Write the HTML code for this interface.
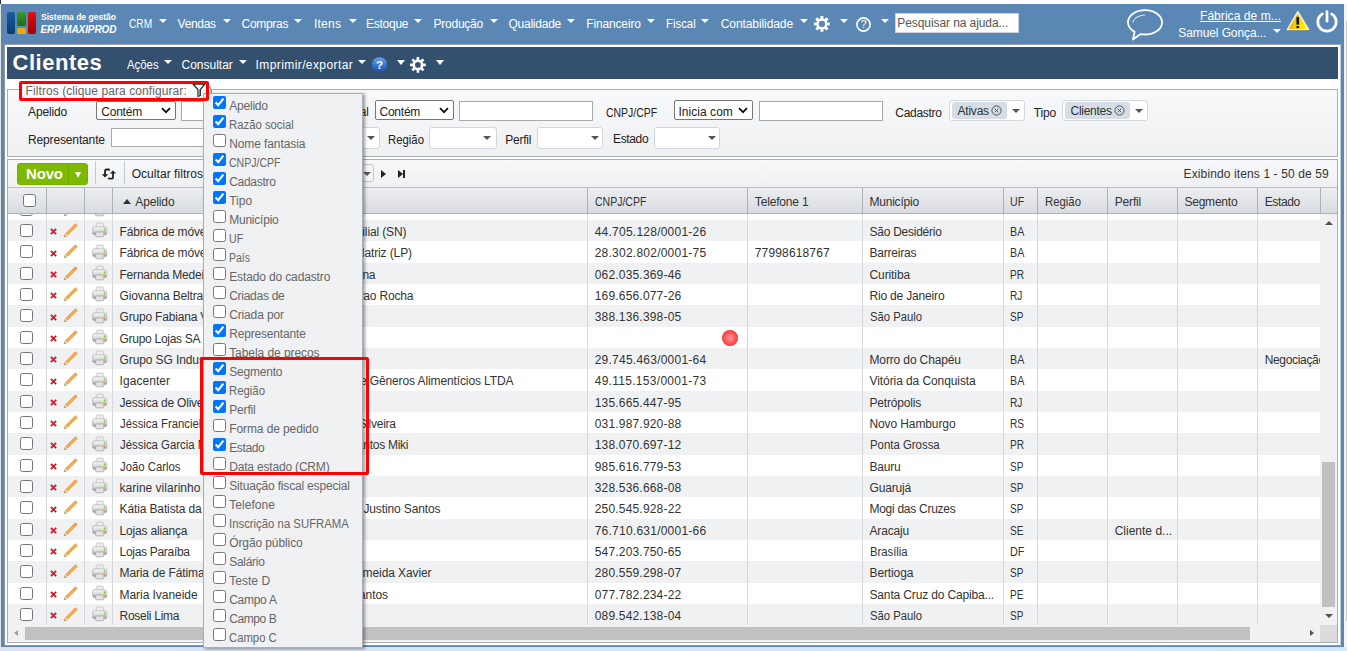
<!DOCTYPE html><html><head><meta charset="utf-8"><title>Clientes</title><style>

*{box-sizing:border-box}
html,body{margin:0;padding:0}
body{width:1347px;height:651px;overflow:hidden;position:relative;background:#fff;font-family:"Liberation Sans",sans-serif;font-size:12px;color:#333}
.ab{position:absolute}
.tx{position:absolute;white-space:nowrap}
.cb{position:absolute;margin:0;width:13px;height:13px}
.s2{position:absolute;border:1px solid #d3d6da;border-radius:3px;background:#fff}
.row{position:absolute;left:0;width:1312px;height:21.333px}
.odd{background:#f0f1f3}
.vd{position:absolute;width:1px;background:#d4d7dc}
.hd{position:absolute;width:1px;background:#aab1b9}

</style></head><body>
<div class="ab" style="left:0px;top:0px;width:1px;height:4px;background:#1e2f45;"></div>
<div class="ab" style="left:1px;top:4px;width:1343px;height:643px;background:#5b87b5;"></div>
<div class="ab" style="left:0px;top:4px;width:1px;height:647px;background:#e6e2de;"></div>
<div class="ab" style="left:1344px;top:4px;width:3px;height:647px;background:#f4f4f4;"></div>
<div class="ab" style="left:1345.5px;top:21px;width:1.5px;height:600px;background:#c8c8c8;"></div>
<div class="ab" style="left:0px;top:647px;width:1347px;height:4px;background:linear-gradient(90deg,#dde2f2,#d6e4f3 50%,#d0e9f4);"></div>
<div class="ab" style="left:4px;top:44px;width:1337px;height:601.5px;background:#fff;border:1px solid #8c97a4;border-right-color:#c9ced4;border-top-color:#9aa3ad"></div>
<div class="ab" style="left:7px;top:47px;width:1331px;height:31.5px;background:#34506f;"></div>
<div class="ab" style="left:4px;top:10px;width:32px;height:24px">
<div class="ab" style="left:3px;top:2px;width:8px;height:21.5px;border-radius:2px;background:linear-gradient(#1a5aa0,#0d3b73)"></div>
<div class="ab" style="left:13px;top:2px;width:8.5px;height:13.5px;border-radius:2px;background:linear-gradient(#3a9a2a,#1d6e12)"></div>
<div class="ab" style="left:13px;top:17.5px;width:8.5px;height:6px;border-radius:1.5px;background:#e9a90f"></div>
<div class="ab" style="left:23.5px;top:2px;width:8px;height:21.5px;border-radius:2px;background:linear-gradient(#e01010,#a00000)"></div>
</div>
<div class="tx" style="left:41.00px;top:12.13px;font-size:9px;line-height:11px;color:#fff;font-weight:bold;transform:scaleX(0.9491);transform-origin:0 0;">Sistema de gestão</div>
<div class="tx" style="left:40.50px;top:23.99px;font-size:10px;line-height:12px;color:#fff;font-weight:bold;font-style:italic;letter-spacing:-0.078px;">ERP MAXIPROD</div>
<div class="tx" style="left:129.10px;top:16.83px;font-size:12px;line-height:14px;color:#fff;transform:scaleX(0.8453);transform-origin:0 0;">CRM</div>
<div class="ab" style="left:158.5px;top:18.8px;width:0;height:0;border-left:4.25px solid transparent;border-right:4.25px solid transparent;border-top:4.5px solid #fff"></div>
<div class="tx" style="left:177.60px;top:16.83px;font-size:12px;line-height:14px;color:#fff;letter-spacing:-0.307px;">Vendas</div>
<div class="ab" style="left:222.5px;top:18.8px;width:0;height:0;border-left:4.25px solid transparent;border-right:4.25px solid transparent;border-top:4.5px solid #fff"></div>
<div class="tx" style="left:241.60px;top:16.83px;font-size:12px;line-height:14px;color:#fff;letter-spacing:-0.313px;">Compras</div>
<div class="ab" style="left:294px;top:18.8px;width:0;height:0;border-left:4.25px solid transparent;border-right:4.25px solid transparent;border-top:4.5px solid #fff"></div>
<div class="tx" style="left:313.90px;top:16.83px;font-size:12px;line-height:14px;color:#fff;letter-spacing:0.247px;">Itens</div>
<div class="ab" style="left:348.5px;top:18.8px;width:0;height:0;border-left:4.25px solid transparent;border-right:4.25px solid transparent;border-top:4.5px solid #fff"></div>
<div class="tx" style="left:366.10px;top:16.83px;font-size:12px;line-height:14px;color:#fff;letter-spacing:-0.272px;">Estoque</div>
<div class="ab" style="left:414px;top:18.8px;width:0;height:0;border-left:4.25px solid transparent;border-right:4.25px solid transparent;border-top:4.5px solid #fff"></div>
<div class="tx" style="left:433.50px;top:16.83px;font-size:12px;line-height:14px;color:#fff;letter-spacing:-0.238px;">Produção</div>
<div class="ab" style="left:489.5px;top:18.8px;width:0;height:0;border-left:4.25px solid transparent;border-right:4.25px solid transparent;border-top:4.5px solid #fff"></div>
<div class="tx" style="left:508.40px;top:16.83px;font-size:12px;line-height:14px;color:#fff;letter-spacing:-0.226px;">Qualidade</div>
<div class="ab" style="left:566.5px;top:18.8px;width:0;height:0;border-left:4.25px solid transparent;border-right:4.25px solid transparent;border-top:4.5px solid #fff"></div>
<div class="tx" style="left:586.30px;top:16.83px;font-size:12px;line-height:14px;color:#fff;letter-spacing:-0.158px;">Financeiro</div>
<div class="ab" style="left:647px;top:18.8px;width:0;height:0;border-left:4.25px solid transparent;border-right:4.25px solid transparent;border-top:4.5px solid #fff"></div>
<div class="tx" style="left:665.80px;top:16.83px;font-size:12px;line-height:14px;color:#fff;transform:scaleX(0.9478);transform-origin:0 0;">Fiscal</div>
<div class="ab" style="left:701px;top:18.8px;width:0;height:0;border-left:4.25px solid transparent;border-right:4.25px solid transparent;border-top:4.5px solid #fff"></div>
<div class="tx" style="left:720.80px;top:16.83px;font-size:12px;line-height:14px;color:#fff;letter-spacing:-0.090px;">Contabilidade</div>
<div class="ab" style="left:799.5px;top:18.8px;width:0;height:0;border-left:4.25px solid transparent;border-right:4.25px solid transparent;border-top:4.5px solid #fff"></div>
<svg class="ab" style="left:814px;top:16px" width="15.8" height="15.8" viewBox="0 0 16 16"><g fill="#fff"><rect x="6.5" y="0" width="3.0" height="3.4000000000000004" rx=".4" transform="rotate(0.0 8 8)"/><rect x="6.5" y="0" width="3.0" height="3.4000000000000004" rx=".4" transform="rotate(45.0 8 8)"/><rect x="6.5" y="0" width="3.0" height="3.4000000000000004" rx=".4" transform="rotate(90.0 8 8)"/><rect x="6.5" y="0" width="3.0" height="3.4000000000000004" rx=".4" transform="rotate(135.0 8 8)"/><rect x="6.5" y="0" width="3.0" height="3.4000000000000004" rx=".4" transform="rotate(180.0 8 8)"/><rect x="6.5" y="0" width="3.0" height="3.4000000000000004" rx=".4" transform="rotate(225.0 8 8)"/><rect x="6.5" y="0" width="3.0" height="3.4000000000000004" rx=".4" transform="rotate(270.0 8 8)"/><rect x="6.5" y="0" width="3.0" height="3.4000000000000004" rx=".4" transform="rotate(315.0 8 8)"/></g><circle cx="8" cy="8" r="4.4" fill="none" stroke="#fff" stroke-width="2.3999999999999995"/></svg>
<div class="ab" style="left:839.5px;top:18.8px;width:0;height:0;border-left:4.25px solid transparent;border-right:4.25px solid transparent;border-top:4.5px solid #fff"></div>
<svg class="ab" style="left:855.5px;top:16.5px" width="15" height="15" viewBox="0 0 15 15"><circle cx="7.5" cy="7.5" r="6.6" fill="none" stroke="#fff" stroke-width="1.6"/><text x="7.5" y="11.4" text-anchor="middle" font-family="Liberation Sans" font-size="11" fill="#fff">?</text></svg>
<div class="ab" style="left:880.7px;top:18.8px;width:0;height:0;border-left:4.25px solid transparent;border-right:4.25px solid transparent;border-top:4.5px solid #fff"></div>
<div class="ab" style="left:895px;top:13px;width:124px;height:20px;background:#fff;border:1px solid #c8d3df"></div>
<div class="tx" style="left:897.30px;top:16.33px;font-size:12px;line-height:14px;color:#555;letter-spacing:-0.084px;">Pesquisar na ajuda...</div>
<svg class="ab" style="left:1126px;top:8px" width="38" height="34" viewBox="0 0 38 34"><path d="M19 2.2C9.5 2.2 2 7.6 2 14.3c0 4 2.6 7.4 6.6 9.6L7 31.5l7.6-5.4c1.4.3 2.9.4 4.4.4 9.5 0 17-5.4 17-12.1S28.5 2.2 19 2.2z" fill="none" stroke="#fff" stroke-width="1.8" stroke-linejoin="round"/><path d="M6.8 14.2c1.3-3.8 5.5-6.6 12-7.2" fill="none" stroke="#fff" stroke-width="1.1" stroke-linecap="round" opacity=".75"/></svg>
<div class="tx" style="left:1200.00px;top:9.13px;font-size:12px;line-height:14px;color:#fff;letter-spacing:0.056px;text-decoration:underline;">Fábrica de m...</div>
<div class="tx" style="left:1178.30px;top:26.03px;font-size:12px;line-height:14px;color:#fff;letter-spacing:-0.098px;">Samuel Gonça...</div>
<div class="ab" style="left:1273px;top:29.2px;width:0;height:0;border-left:4.0px solid transparent;border-right:4.0px solid transparent;border-top:4.5px solid #fff"></div>
<svg class="ab" style="left:1286px;top:10px" width="25" height="22" viewBox="0 0 25 22"><defs><linearGradient id="wg" x1="0" y1="0" x2="1" y2="0"><stop offset="0" stop-color="#f4a800"/><stop offset=".55" stop-color="#ffd800"/><stop offset="1" stop-color="#ffff20"/></linearGradient></defs><path d="M1.2 20.3h22.4" stroke="#6a6a6a" stroke-width="1.4"/><path d="M11.8 1.6L1.3 19.6h21.4z" fill="url(#wg)" stroke="#f4f4f0" stroke-width="1.3" stroke-linejoin="round"/><rect x="10.4" y="6.8" width="2.7" height="8" rx=".8" fill="#111"/><rect x="10.4" y="16" width="2.7" height="2.2" fill="#222"/></svg>
<svg class="ab" style="left:1315px;top:8.3px" width="24" height="25" viewBox="0 0 24 25"><path d="M7.4 5.9A9.2 9.2 0 1 0 16.6 5.9" fill="none" stroke="#fff" stroke-width="2.7" stroke-linecap="round"/><path d="M12 3.6V13.2" stroke="#fff" stroke-width="2.7" stroke-linecap="round"/></svg>
<div class="tx" style="left:12.50px;top:50.33px;font-size:22px;line-height:26px;color:#fff;font-weight:bold;letter-spacing:0.532px;">Clientes</div>
<div class="tx" style="left:126.70px;top:57.83px;font-size:12px;line-height:14px;color:#fff;transform:scaleX(0.9475);transform-origin:0 0;">Ações</div>
<div class="ab" style="left:164px;top:60px;width:0;height:0;border-left:4.2px solid transparent;border-right:4.2px solid transparent;border-top:4.6px solid #fff"></div>
<div class="tx" style="left:181.50px;top:57.83px;font-size:12px;line-height:14px;color:#fff;">Consultar</div>
<div class="ab" style="left:238.5px;top:60px;width:0;height:0;border-left:4.2px solid transparent;border-right:4.2px solid transparent;border-top:4.6px solid #fff"></div>
<div class="tx" style="left:255.60px;top:57.83px;font-size:12px;line-height:14px;color:#fff;letter-spacing:0.402px;">Imprimir/exportar</div>
<div class="ab" style="left:358px;top:60px;width:0;height:0;border-left:4.2px solid transparent;border-right:4.2px solid transparent;border-top:4.6px solid #fff"></div>
<svg class="ab" style="left:371.5px;top:57.3px" width="15" height="15.3" viewBox="0 0 15 15.3"><defs><linearGradient id="hg" x1="0" y1="0" x2="0" y2="1"><stop offset="0" stop-color="#6ea2ec"/><stop offset=".5" stop-color="#3a78d8"/><stop offset="1" stop-color="#1c4fae"/></linearGradient></defs><circle cx="7.5" cy="7.65" r="7.5" fill="url(#hg)"/><text x="7.5" y="12" text-anchor="middle" font-family="Liberation Sans" font-weight="bold" font-size="11.5" fill="#fff">?</text></svg>
<div class="ab" style="left:397px;top:60px;width:0;height:0;border-left:4.0px solid transparent;border-right:4.0px solid transparent;border-top:5px solid #fff"></div>
<svg class="ab" style="left:410px;top:57px" width="15.8" height="15.8" viewBox="0 0 16 16"><g fill="#fff"><rect x="6.7" y="0" width="2.6" height="3.4000000000000004" rx=".4" transform="rotate(0.0 8 8)"/><rect x="6.7" y="0" width="2.6" height="3.4000000000000004" rx=".4" transform="rotate(45.0 8 8)"/><rect x="6.7" y="0" width="2.6" height="3.4000000000000004" rx=".4" transform="rotate(90.0 8 8)"/><rect x="6.7" y="0" width="2.6" height="3.4000000000000004" rx=".4" transform="rotate(135.0 8 8)"/><rect x="6.7" y="0" width="2.6" height="3.4000000000000004" rx=".4" transform="rotate(180.0 8 8)"/><rect x="6.7" y="0" width="2.6" height="3.4000000000000004" rx=".4" transform="rotate(225.0 8 8)"/><rect x="6.7" y="0" width="2.6" height="3.4000000000000004" rx=".4" transform="rotate(270.0 8 8)"/><rect x="6.7" y="0" width="2.6" height="3.4000000000000004" rx=".4" transform="rotate(315.0 8 8)"/></g><circle cx="8" cy="8" r="4.25" fill="none" stroke="#fff" stroke-width="2.6999999999999997"/></svg>
<div class="ab" style="left:436px;top:60px;width:0;height:0;border-left:4.0px solid transparent;border-right:4.0px solid transparent;border-top:5px solid #fff"></div>
<div class="ab" style="left:7px;top:89px;width:1331px;height:68px;border:1px solid #a7aeb6;background:linear-gradient(#f8f9fa,#eff0f2)"></div>
<div class="ab" style="left:20px;top:83px;width:192px;height:6.5px;background:#fff;"></div>
<div class="ab" style="left:20px;top:89.5px;width:192px;height:4px;background:#f8f9fa;"></div>
<div class="tx" style="left:25.60px;top:84.13px;font-size:12px;line-height:14px;color:#666;letter-spacing:0.077px;">Filtros (clique para configurar:</div>
<div class="tx" style="left:208.50px;top:84.13px;font-size:12px;line-height:14px;color:#666;">)</div>
<svg class="ab" style="left:192px;top:83px" width="14" height="14" viewBox="0 0 14 14"><path d="M1.2 1.2h11.6L8.3 6.6v5.8L6 13.3V6.6z" fill="#fff" stroke="#222" stroke-width="1.3" stroke-linejoin="round"/><path d="M6.1 7v6l2.1-.9V7z" fill="#888"/></svg>
<div class="tx" style="left:28.10px;top:105.23px;font-size:12px;line-height:14px;color:#222;letter-spacing:-0.155px;">Apelido</div>
<div class="ab" style="left:96px;top:100.5px;width:80px;height:19px;border:1px solid #767676;border-radius:2px;background:#fff"></div><div class="tx" style="left:101.30px;top:105.33px;font-size:12px;line-height:14px;color:#222;letter-spacing:-0.238px;">Contém</div><svg class="ab" style="left:161px;top:107.0px" width="10" height="7" viewBox="0 0 10 7"><path d="M1 1.2l4 4 4-4" fill="none" stroke="#111" stroke-width="1.8"/></svg>
<div class="ab" style="left:181px;top:101px;width:160px;height:19.5px;border:1px solid #a9a9a9;background:#fff"></div>
<div class="tx" style="left:304.18px;top:105.23px;font-size:12px;line-height:14px;color:#222;transform:scaleX(0.9436);transform-origin:0 0;">Razão social</div>
<div class="ab" style="left:374.5px;top:100.3px;width:79px;height:19.3px;border:1px solid #767676;border-radius:2px;background:#fff"></div><div class="tx" style="left:379.50px;top:105.33px;font-size:12px;line-height:14px;color:#222;letter-spacing:-0.238px;">Contém</div><svg class="ab" style="left:438.5px;top:106.8px" width="10" height="7" viewBox="0 0 10 7"><path d="M1 1.2l4 4 4-4" fill="none" stroke="#111" stroke-width="1.8"/></svg>
<div class="ab" style="left:459.3px;top:101px;width:133.5px;height:19.6px;border:1px solid #a9a9a9;background:#fff"></div>
<div class="tx" style="left:606.00px;top:106.03px;font-size:12px;line-height:14px;color:#222;transform:scaleX(0.8710);transform-origin:0 0;">CNPJ/CPF</div>
<div class="ab" style="left:674.4px;top:100.3px;width:79px;height:19.3px;border:1px solid #767676;border-radius:2px;background:#fff"></div><div class="tx" style="left:678.50px;top:105.33px;font-size:12px;line-height:14px;color:#222;letter-spacing:0.038px;">Inicia com</div><svg class="ab" style="left:738.4px;top:106.8px" width="10" height="7" viewBox="0 0 10 7"><path d="M1 1.2l4 4 4-4" fill="none" stroke="#111" stroke-width="1.8"/></svg>
<div class="ab" style="left:758.9px;top:101px;width:124px;height:19.6px;border:1px solid #a9a9a9;background:#fff"></div>
<div class="tx" style="left:895.30px;top:106.03px;font-size:12px;line-height:14px;color:#222;letter-spacing:-0.292px;">Cadastro</div>
<div class="s2" style="left:948.5px;top:99.6px;width:76px;height:21.8px"></div>
<div class="ab" style="left:952px;top:102px;width:55px;height:16.7px;border-radius:3px;background:#d5dde7"></div>
<div class="tx" style="left:957.50px;top:104.33px;font-size:12px;line-height:14px;color:#333;letter-spacing:-0.216px;">Ativas</div>
<svg class="ab" style="left:991px;top:105px" width="11" height="11" viewBox="0 0 11 11"><circle cx="5.5" cy="5.5" r="4.6" fill="none" stroke="#555" stroke-width="1"/><path d="M3.6 3.6l3.8 3.8M7.4 3.6l-3.8 3.8" stroke="#555" stroke-width="1"/></svg>
<div class="ab" style="left:1012px;top:109px;width:0;height:0;border-left:4.5px solid transparent;border-right:4.5px solid transparent;border-top:4.5px solid #555"></div>
<div class="tx" style="left:1033.70px;top:106.03px;font-size:12px;line-height:14px;color:#222;letter-spacing:-0.099px;">Tipo</div>
<div class="s2" style="left:1061.5px;top:99.6px;width:86px;height:21.8px"></div>
<div class="ab" style="left:1065.4px;top:102px;width:64.5px;height:16.7px;border-radius:3px;background:#d5dde7"></div>
<div class="tx" style="left:1070.50px;top:104.33px;font-size:12px;line-height:14px;color:#333;letter-spacing:-0.281px;">Clientes</div>
<svg class="ab" style="left:1114px;top:105px" width="11" height="11" viewBox="0 0 11 11"><circle cx="5.5" cy="5.5" r="4.6" fill="none" stroke="#555" stroke-width="1"/><path d="M3.6 3.6l3.8 3.8M7.4 3.6l-3.8 3.8" stroke="#555" stroke-width="1"/></svg>
<div class="ab" style="left:1134.5px;top:109px;width:0;height:0;border-left:4.5px solid transparent;border-right:4.5px solid transparent;border-top:4.5px solid #555"></div>
<div class="tx" style="left:28.00px;top:132.73px;font-size:12px;line-height:14px;color:#222;letter-spacing:-0.143px;">Representante</div>
<div class="ab" style="left:111px;top:128.4px;width:200px;height:19px;border:1px solid #a9a9a9;background:#fff"></div>
<div class="s2" style="left:300px;top:126.5px;width:79.5px;height:22px"></div>
<div class="ab" style="left:366.5px;top:136px;width:0;height:0;border-left:4.5px solid transparent;border-right:4.5px solid transparent;border-top:4.5px solid #555"></div>
<div class="tx" style="left:388.00px;top:132.73px;font-size:12px;line-height:14px;color:#222;transform:scaleX(0.9467);transform-origin:0 0;">Região</div>
<div class="s2" style="left:429.2px;top:126.5px;width:67.4px;height:22px"></div>
<div class="ab" style="left:482.5px;top:136px;width:0;height:0;border-left:4.5px solid transparent;border-right:4.5px solid transparent;border-top:4.5px solid #555"></div>
<div class="tx" style="left:505.30px;top:132.73px;font-size:12px;line-height:14px;color:#222;letter-spacing:-0.268px;">Perfil</div>
<div class="s2" style="left:537.4px;top:126.5px;width:65.8px;height:22px"></div>
<div class="ab" style="left:590.5px;top:136px;width:0;height:0;border-left:4.5px solid transparent;border-right:4.5px solid transparent;border-top:4.5px solid #555"></div>
<div class="tx" style="left:613.00px;top:132.43px;font-size:12px;line-height:14px;color:#222;letter-spacing:-0.352px;">Estado</div>
<div class="s2" style="left:654.4px;top:126.5px;width:66px;height:22px"></div>
<div class="ab" style="left:707.5px;top:136px;width:0;height:0;border-left:4.5px solid transparent;border-right:4.5px solid transparent;border-top:4.5px solid #555"></div>
<div class="ab" style="left:7px;top:159px;width:1331px;height:483.5px;border:1px solid #a7aeb6;background:#fff"></div>
<div class="ab" style="left:8px;top:160px;width:1329px;height:27.5px;background:linear-gradient(#f7f8f9,#eef0f2);border-bottom:1px solid #b8bec5"></div>
<div class="ab" style="left:17.2px;top:163.2px;width:70.8px;height:21.5px;border-radius:3px;background:#7cb900;border:1px solid #74b000"></div>
<div class="ab" style="left:68px;top:163.2px;width:1px;height:21.5px;background:#70a800;"></div>
<div class="tx" style="left:26.00px;top:165.04px;font-size:15px;line-height:18px;color:#fff;font-weight:bold;letter-spacing:-0.166px;">Novo</div>
<div class="ab" style="left:74.5px;top:172px;width:0;height:0;border-left:3.5px solid transparent;border-right:3.5px solid transparent;border-top:6.5px solid #fff"></div>
<div class="ab" style="left:94.5px;top:161px;width:1px;height:23px;background:#c4c9cf;"></div>
<div class="ab" style="left:124.3px;top:161px;width:1px;height:23px;background:#c4c9cf;"></div>
<svg class="ab" style="left:98px;top:164px" width="24" height="20" viewBox="0 0 24 20"><path d="M7 11V7.3c0-1 .6-1.8 1.6-1.8h2.2l.8 1" fill="none" stroke="#222" stroke-width="1.8"/><path d="M3.8 10.2h6.4L7 13.4z" fill="#222"/><path d="M15 9v4.4c0 .9-.6 1.3-1.6 1.3h-2.2l-.8-1" fill="none" stroke="#222" stroke-width="1.8"/><path d="M11.8 9.6h6.4L15 6.4z" fill="#222"/></svg>
<div class="tx" style="left:131.70px;top:166.83px;font-size:12px;line-height:14px;color:#222;letter-spacing:0.049px;">Ocultar filtros</div>
<div class="s2" style="left:300px;top:163.6px;width:74px;height:18px;border-color:#c5c9ce;background:#f4f5f6"></div>
<div class="ab" style="left:362.5px;top:172px;width:0;height:0;border-left:4.5px solid transparent;border-right:4.5px solid transparent;border-top:4.5px solid #555"></div>
<div class="ab" style="left:380.5px;top:169.8px;width:0;height:0;border-top:4.3px solid transparent;border-bottom:4.3px solid transparent;border-left:5px solid #222"></div>
<div class="ab" style="left:397.5px;top:169.8px;width:0;height:0;border-top:4.3px solid transparent;border-bottom:4.3px solid transparent;border-left:5px solid #222"></div>
<div class="ab" style="left:403px;top:169.8px;width:1.5px;height:8.6px;background:#222;"></div>
<div class="tx" style="left:1183.60px;top:166.63px;font-size:12px;line-height:14px;color:#333;letter-spacing:0.116px;">Exibindo itens 1 - 50 de 59</div>
<div class="ab" style="left:8px;top:187.5px;width:1329px;height:26px;background:linear-gradient(#eceef1,#d8dbe0);border-bottom:1px solid #aab1b9"></div>
<div class="hd" style="left:46.0px;top:187.5px;height:26px"></div>
<div class="hd" style="left:84.0px;top:187.5px;height:26px"></div>
<div class="hd" style="left:112.0px;top:187.5px;height:26px"></div>
<div class="hd" style="left:238.0px;top:187.5px;height:26px"></div>
<div class="hd" style="left:587.0px;top:187.5px;height:26px"></div>
<div class="hd" style="left:747.0px;top:187.5px;height:26px"></div>
<div class="hd" style="left:862.0px;top:187.5px;height:26px"></div>
<div class="hd" style="left:1002.5px;top:187.5px;height:26px"></div>
<div class="hd" style="left:1037.0px;top:187.5px;height:26px"></div>
<div class="hd" style="left:1107.0px;top:187.5px;height:26px"></div>
<div class="hd" style="left:1177.0px;top:187.5px;height:26px"></div>
<div class="hd" style="left:1257.0px;top:187.5px;height:26px"></div>
<div class="hd" style="left:1320.0px;top:187.5px;height:26px"></div>
<input type="checkbox" class="cb" style="left:23px;top:194px">
<div class="ab" style="left:122.5px;top:198.5px;width:0;height:0;border-left:4.5px solid transparent;border-right:4.5px solid transparent;border-bottom:5px solid #333"></div>
<div class="tx" style="left:135.30px;top:195.13px;font-size:12px;line-height:14px;color:#333;letter-spacing:-0.122px;">Apelido</div>
<div class="tx" style="left:245.50px;top:195.13px;font-size:12px;line-height:14px;color:#333;transform:scaleX(0.9436);transform-origin:0 0;">Razão social</div>
<div class="tx" style="left:594.70px;top:195.13px;font-size:12px;line-height:14px;color:#333;transform:scaleX(0.8761);transform-origin:0 0;">CNPJ/CPF</div>
<div class="tx" style="left:754.80px;top:195.13px;font-size:12px;line-height:14px;color:#333;letter-spacing:-0.164px;">Telefone 1</div>
<div class="tx" style="left:869.50px;top:195.13px;font-size:12px;line-height:14px;color:#333;letter-spacing:-0.223px;">Município</div>
<div class="tx" style="left:1009.90px;top:195.13px;font-size:12px;line-height:14px;color:#333;transform:scaleX(0.8830);transform-origin:0 0;">UF</div>
<div class="tx" style="left:1044.60px;top:195.13px;font-size:12px;line-height:14px;color:#333;transform:scaleX(0.9452);transform-origin:0 0;">Região</div>
<div class="tx" style="left:1114.70px;top:195.13px;font-size:12px;line-height:14px;color:#333;letter-spacing:-0.157px;">Perfil</div>
<div class="tx" style="left:1184.40px;top:195.13px;font-size:12px;line-height:14px;color:#333;letter-spacing:-0.208px;">Segmento</div>
<div class="tx" style="left:1264.70px;top:195.13px;font-size:12px;line-height:14px;color:#333;letter-spacing:-0.363px;">Estado</div>
<div class="ab" style="left:8px;top:213.5px;width:1312px;height:411.5px;overflow:hidden">
<div class="row" style="top:-14.933px"><input type="checkbox" class="cb" style="left:12px;top:4.2px"><svg class="ab" style="left:42.3px;top:8.4px" width="7" height="7" viewBox="0 0 7 7"><path d="M.9 .9L6.1 6.1M6.1 .9L.9 6.1" stroke="#c9252c" stroke-width="2"/></svg><svg class="ab" style="left:55px;top:3px" width="15" height="15" viewBox="0 0 15 15"><path d="M3.4 11.6L12.4 2.6" stroke="#f0a040" stroke-width="3.2" stroke-linecap="square"/><path d="M3.4 11.6L12.4 2.6" stroke="#f7b860" stroke-width="1"/><path d="M1.3 13.7l1-3.3 2.3 2.3z" fill="#f3dcb8"/><path d="M1.2 13.8l.5-1.6 1.1 1.1z" fill="#222"/></svg><svg class="ab" style="left:83.5px;top:1.5px" width="16" height="17" viewBox="0 0 16 17"><defs><linearGradient id="pg-1" x1="0" y1="0" x2="0" y2="1"><stop offset="0" stop-color="#fafafa"/><stop offset=".55" stop-color="#d8d8d8"/><stop offset="1" stop-color="#8a8a8a"/></linearGradient></defs><rect x="4.2" y="2" width="7.2" height="5" rx="1" fill="#ececec" stroke="#c4c4c4" stroke-width=".8"/><rect x=".6" y="5.8" width="14.2" height="7.8" rx="1.5" fill="url(#pg-1)" stroke="#b0b0b0" stroke-width=".7"/><rect x="3.6" y="11" width="8.2" height="4.8" rx="1" fill="#e2e2e2" stroke="#a8a8a8" stroke-width=".8"/><circle cx="12.6" cy="8" r=".85" fill="#3c3"/><circle cx="12.6" cy="10.1" r=".85" fill="#eb0"/></svg></div>
<div class="row odd" style="top:6.400px"><input type="checkbox" class="cb" style="left:12px;top:4.2px"><svg class="ab" style="left:42.3px;top:8.4px" width="7" height="7" viewBox="0 0 7 7"><path d="M.9 .9L6.1 6.1M6.1 .9L.9 6.1" stroke="#c9252c" stroke-width="2"/></svg><svg class="ab" style="left:55px;top:3px" width="15" height="15" viewBox="0 0 15 15"><path d="M3.4 11.6L12.4 2.6" stroke="#f0a040" stroke-width="3.2" stroke-linecap="square"/><path d="M3.4 11.6L12.4 2.6" stroke="#f7b860" stroke-width="1"/><path d="M1.3 13.7l1-3.3 2.3 2.3z" fill="#f3dcb8"/><path d="M1.2 13.8l.5-1.6 1.1 1.1z" fill="#222"/></svg><svg class="ab" style="left:83.5px;top:1.5px" width="16" height="17" viewBox="0 0 16 17"><defs><linearGradient id="pg0" x1="0" y1="0" x2="0" y2="1"><stop offset="0" stop-color="#fafafa"/><stop offset=".55" stop-color="#d8d8d8"/><stop offset="1" stop-color="#8a8a8a"/></linearGradient></defs><rect x="4.2" y="2" width="7.2" height="5" rx="1" fill="#ececec" stroke="#c4c4c4" stroke-width=".8"/><rect x=".6" y="5.8" width="14.2" height="7.8" rx="1.5" fill="url(#pg0)" stroke="#b0b0b0" stroke-width=".7"/><rect x="3.6" y="11" width="8.2" height="4.8" rx="1" fill="#e2e2e2" stroke="#a8a8a8" stroke-width=".8"/><circle cx="12.6" cy="8" r=".85" fill="#3c3"/><circle cx="12.6" cy="10.1" r=".85" fill="#eb0"/></svg><div class="tx" style="left:111.50px;top:5.03px;font-size:12px;line-height:14px;color:#333;letter-spacing:-0.177px;">Fábrica de móveis X</div><div class="ab" style="left:230.5px;top:0;width:349.0px;height:21px;overflow:hidden"><div class="tx" style="left:17.53px;top:5.03px;font-size:12px;line-height:14px;color:#333;letter-spacing:-0.127px;">Fábrica de móveis Filial (SN)</div></div><div class="tx" style="left:586.70px;top:5.03px;font-size:12px;line-height:14px;color:#333;letter-spacing:0.238px;">44.705.128/0001-26</div><div class="tx" style="left:861.50px;top:5.03px;font-size:12px;line-height:14px;color:#333;letter-spacing:-0.253px;">São Desidério</div><div class="tx" style="left:1001.90px;top:5.03px;font-size:12px;line-height:14px;color:#333;transform:scaleX(0.8920);transform-origin:0 0;">BA</div></div>
<div class="row" style="top:27.733px"><input type="checkbox" class="cb" style="left:12px;top:4.2px"><svg class="ab" style="left:42.3px;top:8.4px" width="7" height="7" viewBox="0 0 7 7"><path d="M.9 .9L6.1 6.1M6.1 .9L.9 6.1" stroke="#c9252c" stroke-width="2"/></svg><svg class="ab" style="left:55px;top:3px" width="15" height="15" viewBox="0 0 15 15"><path d="M3.4 11.6L12.4 2.6" stroke="#f0a040" stroke-width="3.2" stroke-linecap="square"/><path d="M3.4 11.6L12.4 2.6" stroke="#f7b860" stroke-width="1"/><path d="M1.3 13.7l1-3.3 2.3 2.3z" fill="#f3dcb8"/><path d="M1.2 13.8l.5-1.6 1.1 1.1z" fill="#222"/></svg><svg class="ab" style="left:83.5px;top:1.5px" width="16" height="17" viewBox="0 0 16 17"><defs><linearGradient id="pg1" x1="0" y1="0" x2="0" y2="1"><stop offset="0" stop-color="#fafafa"/><stop offset=".55" stop-color="#d8d8d8"/><stop offset="1" stop-color="#8a8a8a"/></linearGradient></defs><rect x="4.2" y="2" width="7.2" height="5" rx="1" fill="#ececec" stroke="#c4c4c4" stroke-width=".8"/><rect x=".6" y="5.8" width="14.2" height="7.8" rx="1.5" fill="url(#pg1)" stroke="#b0b0b0" stroke-width=".7"/><rect x="3.6" y="11" width="8.2" height="4.8" rx="1" fill="#e2e2e2" stroke="#a8a8a8" stroke-width=".8"/><circle cx="12.6" cy="8" r=".85" fill="#3c3"/><circle cx="12.6" cy="10.1" r=".85" fill="#eb0"/></svg><div class="tx" style="left:111.50px;top:5.03px;font-size:12px;line-height:14px;color:#333;letter-spacing:-0.177px;">Fábrica de móveis X</div><div class="ab" style="left:230.5px;top:0;width:349.0px;height:21px;overflow:hidden"><div class="tx" style="left:16.72px;top:5.03px;font-size:12px;line-height:14px;color:#333;letter-spacing:-0.116px;">Fábrica de móveis Matriz (LP)</div></div><div class="tx" style="left:586.70px;top:5.03px;font-size:12px;line-height:14px;color:#333;letter-spacing:0.238px;">28.302.802/0001-75</div><div class="tx" style="left:746.80px;top:5.03px;font-size:12px;line-height:14px;color:#333;letter-spacing:0.144px;">77998618767</div><div class="tx" style="left:861.50px;top:5.03px;font-size:12px;line-height:14px;color:#333;letter-spacing:-0.205px;">Barreiras</div><div class="tx" style="left:1001.90px;top:5.03px;font-size:12px;line-height:14px;color:#333;transform:scaleX(0.8920);transform-origin:0 0;">BA</div></div>
<div class="row odd" style="top:49.066px"><input type="checkbox" class="cb" style="left:12px;top:4.2px"><svg class="ab" style="left:42.3px;top:8.4px" width="7" height="7" viewBox="0 0 7 7"><path d="M.9 .9L6.1 6.1M6.1 .9L.9 6.1" stroke="#c9252c" stroke-width="2"/></svg><svg class="ab" style="left:55px;top:3px" width="15" height="15" viewBox="0 0 15 15"><path d="M3.4 11.6L12.4 2.6" stroke="#f0a040" stroke-width="3.2" stroke-linecap="square"/><path d="M3.4 11.6L12.4 2.6" stroke="#f7b860" stroke-width="1"/><path d="M1.3 13.7l1-3.3 2.3 2.3z" fill="#f3dcb8"/><path d="M1.2 13.8l.5-1.6 1.1 1.1z" fill="#222"/></svg><svg class="ab" style="left:83.5px;top:1.5px" width="16" height="17" viewBox="0 0 16 17"><defs><linearGradient id="pg2" x1="0" y1="0" x2="0" y2="1"><stop offset="0" stop-color="#fafafa"/><stop offset=".55" stop-color="#d8d8d8"/><stop offset="1" stop-color="#8a8a8a"/></linearGradient></defs><rect x="4.2" y="2" width="7.2" height="5" rx="1" fill="#ececec" stroke="#c4c4c4" stroke-width=".8"/><rect x=".6" y="5.8" width="14.2" height="7.8" rx="1.5" fill="url(#pg2)" stroke="#b0b0b0" stroke-width=".7"/><rect x="3.6" y="11" width="8.2" height="4.8" rx="1" fill="#e2e2e2" stroke="#a8a8a8" stroke-width=".8"/><circle cx="12.6" cy="8" r=".85" fill="#3c3"/><circle cx="12.6" cy="10.1" r=".85" fill="#eb0"/></svg><div class="tx" style="left:111.50px;top:5.03px;font-size:12px;line-height:14px;color:#333;letter-spacing:-0.208px;">Fernanda Medeiros</div><div class="ab" style="left:230.5px;top:0;width:349.0px;height:21px;overflow:hidden"><div class="tx" style="left:6.61px;top:5.03px;font-size:12px;line-height:14px;color:#333;letter-spacing:-0.239px;">Fernanda Medeiros Pena</div></div><div class="tx" style="left:586.70px;top:5.03px;font-size:12px;line-height:14px;color:#333;letter-spacing:0.185px;">062.035.369-46</div><div class="tx" style="left:861.50px;top:5.03px;font-size:12px;line-height:14px;color:#333;letter-spacing:-0.097px;">Curitiba</div><div class="tx" style="left:1001.90px;top:5.03px;font-size:12px;line-height:14px;color:#333;transform:scaleX(0.8422);transform-origin:0 0;">PR</div></div>
<div class="row" style="top:70.399px"><input type="checkbox" class="cb" style="left:12px;top:4.2px"><svg class="ab" style="left:42.3px;top:8.4px" width="7" height="7" viewBox="0 0 7 7"><path d="M.9 .9L6.1 6.1M6.1 .9L.9 6.1" stroke="#c9252c" stroke-width="2"/></svg><svg class="ab" style="left:55px;top:3px" width="15" height="15" viewBox="0 0 15 15"><path d="M3.4 11.6L12.4 2.6" stroke="#f0a040" stroke-width="3.2" stroke-linecap="square"/><path d="M3.4 11.6L12.4 2.6" stroke="#f7b860" stroke-width="1"/><path d="M1.3 13.7l1-3.3 2.3 2.3z" fill="#f3dcb8"/><path d="M1.2 13.8l.5-1.6 1.1 1.1z" fill="#222"/></svg><svg class="ab" style="left:83.5px;top:1.5px" width="16" height="17" viewBox="0 0 16 17"><defs><linearGradient id="pg3" x1="0" y1="0" x2="0" y2="1"><stop offset="0" stop-color="#fafafa"/><stop offset=".55" stop-color="#d8d8d8"/><stop offset="1" stop-color="#8a8a8a"/></linearGradient></defs><rect x="4.2" y="2" width="7.2" height="5" rx="1" fill="#ececec" stroke="#c4c4c4" stroke-width=".8"/><rect x=".6" y="5.8" width="14.2" height="7.8" rx="1.5" fill="url(#pg3)" stroke="#b0b0b0" stroke-width=".7"/><rect x="3.6" y="11" width="8.2" height="4.8" rx="1" fill="#e2e2e2" stroke="#a8a8a8" stroke-width=".8"/><circle cx="12.6" cy="8" r=".85" fill="#3c3"/><circle cx="12.6" cy="10.1" r=".85" fill="#eb0"/></svg><div class="tx" style="left:111.50px;top:5.03px;font-size:12px;line-height:14px;color:#333;letter-spacing:-0.167px;">Giovanna Beltrao</div><div class="ab" style="left:230.5px;top:0;width:349.0px;height:21px;overflow:hidden"><div class="tx" style="left:-2.35px;top:5.03px;font-size:12px;line-height:14px;color:#333;letter-spacing:-0.158px;">Giovanna Beltrame Beltrao Rocha</div></div><div class="tx" style="left:586.70px;top:5.03px;font-size:12px;line-height:14px;color:#333;letter-spacing:0.185px;">169.656.077-26</div><div class="tx" style="left:861.50px;top:5.03px;font-size:12px;line-height:14px;color:#333;letter-spacing:-0.179px;">Rio de Janeiro</div><div class="tx" style="left:1001.90px;top:5.03px;font-size:12px;line-height:14px;color:#333;transform:scaleX(0.8477);transform-origin:0 0;">RJ</div></div>
<div class="row odd" style="top:91.732px"><input type="checkbox" class="cb" style="left:12px;top:4.2px"><svg class="ab" style="left:42.3px;top:8.4px" width="7" height="7" viewBox="0 0 7 7"><path d="M.9 .9L6.1 6.1M6.1 .9L.9 6.1" stroke="#c9252c" stroke-width="2"/></svg><svg class="ab" style="left:55px;top:3px" width="15" height="15" viewBox="0 0 15 15"><path d="M3.4 11.6L12.4 2.6" stroke="#f0a040" stroke-width="3.2" stroke-linecap="square"/><path d="M3.4 11.6L12.4 2.6" stroke="#f7b860" stroke-width="1"/><path d="M1.3 13.7l1-3.3 2.3 2.3z" fill="#f3dcb8"/><path d="M1.2 13.8l.5-1.6 1.1 1.1z" fill="#222"/></svg><svg class="ab" style="left:83.5px;top:1.5px" width="16" height="17" viewBox="0 0 16 17"><defs><linearGradient id="pg4" x1="0" y1="0" x2="0" y2="1"><stop offset="0" stop-color="#fafafa"/><stop offset=".55" stop-color="#d8d8d8"/><stop offset="1" stop-color="#8a8a8a"/></linearGradient></defs><rect x="4.2" y="2" width="7.2" height="5" rx="1" fill="#ececec" stroke="#c4c4c4" stroke-width=".8"/><rect x=".6" y="5.8" width="14.2" height="7.8" rx="1.5" fill="url(#pg4)" stroke="#b0b0b0" stroke-width=".7"/><rect x="3.6" y="11" width="8.2" height="4.8" rx="1" fill="#e2e2e2" stroke="#a8a8a8" stroke-width=".8"/><circle cx="12.6" cy="8" r=".85" fill="#3c3"/><circle cx="12.6" cy="10.1" r=".85" fill="#eb0"/></svg><div class="tx" style="left:111.50px;top:5.03px;font-size:12px;line-height:14px;color:#333;letter-spacing:-0.185px;">Grupo Fabiana Vieira</div><div class="tx" style="left:586.70px;top:5.03px;font-size:12px;line-height:14px;color:#333;letter-spacing:0.185px;">388.136.398-05</div><div class="tx" style="left:861.50px;top:5.03px;font-size:12px;line-height:14px;color:#333;transform:scaleX(0.9414);transform-origin:0 0;">São Paulo</div><div class="tx" style="left:1001.90px;top:5.03px;font-size:12px;line-height:14px;color:#333;transform:scaleX(0.8305);transform-origin:0 0;">SP</div></div>
<div class="row" style="top:113.065px"><input type="checkbox" class="cb" style="left:12px;top:4.2px"><svg class="ab" style="left:42.3px;top:8.4px" width="7" height="7" viewBox="0 0 7 7"><path d="M.9 .9L6.1 6.1M6.1 .9L.9 6.1" stroke="#c9252c" stroke-width="2"/></svg><svg class="ab" style="left:55px;top:3px" width="15" height="15" viewBox="0 0 15 15"><path d="M3.4 11.6L12.4 2.6" stroke="#f0a040" stroke-width="3.2" stroke-linecap="square"/><path d="M3.4 11.6L12.4 2.6" stroke="#f7b860" stroke-width="1"/><path d="M1.3 13.7l1-3.3 2.3 2.3z" fill="#f3dcb8"/><path d="M1.2 13.8l.5-1.6 1.1 1.1z" fill="#222"/></svg><svg class="ab" style="left:83.5px;top:1.5px" width="16" height="17" viewBox="0 0 16 17"><defs><linearGradient id="pg5" x1="0" y1="0" x2="0" y2="1"><stop offset="0" stop-color="#fafafa"/><stop offset=".55" stop-color="#d8d8d8"/><stop offset="1" stop-color="#8a8a8a"/></linearGradient></defs><rect x="4.2" y="2" width="7.2" height="5" rx="1" fill="#ececec" stroke="#c4c4c4" stroke-width=".8"/><rect x=".6" y="5.8" width="14.2" height="7.8" rx="1.5" fill="url(#pg5)" stroke="#b0b0b0" stroke-width=".7"/><rect x="3.6" y="11" width="8.2" height="4.8" rx="1" fill="#e2e2e2" stroke="#a8a8a8" stroke-width=".8"/><circle cx="12.6" cy="8" r=".85" fill="#3c3"/><circle cx="12.6" cy="10.1" r=".85" fill="#eb0"/></svg><div class="tx" style="left:111.50px;top:5.03px;font-size:12px;line-height:14px;color:#333;letter-spacing:-0.281px;">Grupo Lojas SA</div></div>
<div class="row odd" style="top:134.398px"><input type="checkbox" class="cb" style="left:12px;top:4.2px"><svg class="ab" style="left:42.3px;top:8.4px" width="7" height="7" viewBox="0 0 7 7"><path d="M.9 .9L6.1 6.1M6.1 .9L.9 6.1" stroke="#c9252c" stroke-width="2"/></svg><svg class="ab" style="left:55px;top:3px" width="15" height="15" viewBox="0 0 15 15"><path d="M3.4 11.6L12.4 2.6" stroke="#f0a040" stroke-width="3.2" stroke-linecap="square"/><path d="M3.4 11.6L12.4 2.6" stroke="#f7b860" stroke-width="1"/><path d="M1.3 13.7l1-3.3 2.3 2.3z" fill="#f3dcb8"/><path d="M1.2 13.8l.5-1.6 1.1 1.1z" fill="#222"/></svg><svg class="ab" style="left:83.5px;top:1.5px" width="16" height="17" viewBox="0 0 16 17"><defs><linearGradient id="pg6" x1="0" y1="0" x2="0" y2="1"><stop offset="0" stop-color="#fafafa"/><stop offset=".55" stop-color="#d8d8d8"/><stop offset="1" stop-color="#8a8a8a"/></linearGradient></defs><rect x="4.2" y="2" width="7.2" height="5" rx="1" fill="#ececec" stroke="#c4c4c4" stroke-width=".8"/><rect x=".6" y="5.8" width="14.2" height="7.8" rx="1.5" fill="url(#pg6)" stroke="#b0b0b0" stroke-width=".7"/><rect x="3.6" y="11" width="8.2" height="4.8" rx="1" fill="#e2e2e2" stroke="#a8a8a8" stroke-width=".8"/><circle cx="12.6" cy="8" r=".85" fill="#3c3"/><circle cx="12.6" cy="10.1" r=".85" fill="#eb0"/></svg><div class="tx" style="left:111.50px;top:5.03px;font-size:12px;line-height:14px;color:#333;letter-spacing:-0.101px;">Grupo SG Industrial</div><div class="tx" style="left:586.70px;top:5.03px;font-size:12px;line-height:14px;color:#333;letter-spacing:0.238px;">29.745.463/0001-64</div><div class="tx" style="left:861.50px;top:5.03px;font-size:12px;line-height:14px;color:#333;letter-spacing:-0.138px;">Morro do Chapéu</div><div class="tx" style="left:1001.90px;top:5.03px;font-size:12px;line-height:14px;color:#333;transform:scaleX(0.8920);transform-origin:0 0;">BA</div><div class="ab" style="left:1256.7px;top:0;width:56px;height:21px;overflow:hidden"><div class="tx" style="left:0.00px;top:5.03px;font-size:12px;line-height:14px;color:#333;letter-spacing:-0.331px;">Negociação</div></div></div>
<div class="row" style="top:155.731px"><input type="checkbox" class="cb" style="left:12px;top:4.2px"><svg class="ab" style="left:42.3px;top:8.4px" width="7" height="7" viewBox="0 0 7 7"><path d="M.9 .9L6.1 6.1M6.1 .9L.9 6.1" stroke="#c9252c" stroke-width="2"/></svg><svg class="ab" style="left:55px;top:3px" width="15" height="15" viewBox="0 0 15 15"><path d="M3.4 11.6L12.4 2.6" stroke="#f0a040" stroke-width="3.2" stroke-linecap="square"/><path d="M3.4 11.6L12.4 2.6" stroke="#f7b860" stroke-width="1"/><path d="M1.3 13.7l1-3.3 2.3 2.3z" fill="#f3dcb8"/><path d="M1.2 13.8l.5-1.6 1.1 1.1z" fill="#222"/></svg><svg class="ab" style="left:83.5px;top:1.5px" width="16" height="17" viewBox="0 0 16 17"><defs><linearGradient id="pg7" x1="0" y1="0" x2="0" y2="1"><stop offset="0" stop-color="#fafafa"/><stop offset=".55" stop-color="#d8d8d8"/><stop offset="1" stop-color="#8a8a8a"/></linearGradient></defs><rect x="4.2" y="2" width="7.2" height="5" rx="1" fill="#ececec" stroke="#c4c4c4" stroke-width=".8"/><rect x=".6" y="5.8" width="14.2" height="7.8" rx="1.5" fill="url(#pg7)" stroke="#b0b0b0" stroke-width=".7"/><rect x="3.6" y="11" width="8.2" height="4.8" rx="1" fill="#e2e2e2" stroke="#a8a8a8" stroke-width=".8"/><circle cx="12.6" cy="8" r=".85" fill="#3c3"/><circle cx="12.6" cy="10.1" r=".85" fill="#eb0"/></svg><div class="tx" style="left:111.50px;top:5.03px;font-size:12px;line-height:14px;color:#333;letter-spacing:0.067px;">Igacenter</div><div class="ab" style="left:230.5px;top:0;width:349.0px;height:21px;overflow:hidden"><div class="tx" style="left:8.97px;top:5.03px;font-size:12px;line-height:14px;color:#333;letter-spacing:-0.113px;">Igacenter Comércio de Gêneros Alimentícios LTDA</div></div><div class="tx" style="left:586.70px;top:5.03px;font-size:12px;line-height:14px;color:#333;letter-spacing:0.290px;">49.115.153/0001-73</div><div class="tx" style="left:861.50px;top:5.03px;font-size:12px;line-height:14px;color:#333;letter-spacing:-0.082px;">Vitória da Conquista</div><div class="tx" style="left:1001.90px;top:5.03px;font-size:12px;line-height:14px;color:#333;transform:scaleX(0.8920);transform-origin:0 0;">BA</div></div>
<div class="row odd" style="top:177.064px"><input type="checkbox" class="cb" style="left:12px;top:4.2px"><svg class="ab" style="left:42.3px;top:8.4px" width="7" height="7" viewBox="0 0 7 7"><path d="M.9 .9L6.1 6.1M6.1 .9L.9 6.1" stroke="#c9252c" stroke-width="2"/></svg><svg class="ab" style="left:55px;top:3px" width="15" height="15" viewBox="0 0 15 15"><path d="M3.4 11.6L12.4 2.6" stroke="#f0a040" stroke-width="3.2" stroke-linecap="square"/><path d="M3.4 11.6L12.4 2.6" stroke="#f7b860" stroke-width="1"/><path d="M1.3 13.7l1-3.3 2.3 2.3z" fill="#f3dcb8"/><path d="M1.2 13.8l.5-1.6 1.1 1.1z" fill="#222"/></svg><svg class="ab" style="left:83.5px;top:1.5px" width="16" height="17" viewBox="0 0 16 17"><defs><linearGradient id="pg8" x1="0" y1="0" x2="0" y2="1"><stop offset="0" stop-color="#fafafa"/><stop offset=".55" stop-color="#d8d8d8"/><stop offset="1" stop-color="#8a8a8a"/></linearGradient></defs><rect x="4.2" y="2" width="7.2" height="5" rx="1" fill="#ececec" stroke="#c4c4c4" stroke-width=".8"/><rect x=".6" y="5.8" width="14.2" height="7.8" rx="1.5" fill="url(#pg8)" stroke="#b0b0b0" stroke-width=".7"/><rect x="3.6" y="11" width="8.2" height="4.8" rx="1" fill="#e2e2e2" stroke="#a8a8a8" stroke-width=".8"/><circle cx="12.6" cy="8" r=".85" fill="#3c3"/><circle cx="12.6" cy="10.1" r=".85" fill="#eb0"/></svg><div class="tx" style="left:111.50px;top:5.03px;font-size:12px;line-height:14px;color:#333;letter-spacing:-0.222px;">Jessica de Oliveira</div><div class="tx" style="left:586.70px;top:5.03px;font-size:12px;line-height:14px;color:#333;letter-spacing:0.185px;">135.665.447-95</div><div class="tx" style="left:861.50px;top:5.03px;font-size:12px;line-height:14px;color:#333;letter-spacing:-0.177px;">Petrópolis</div><div class="tx" style="left:1001.90px;top:5.03px;font-size:12px;line-height:14px;color:#333;transform:scaleX(0.8477);transform-origin:0 0;">RJ</div></div>
<div class="row" style="top:198.397px"><input type="checkbox" class="cb" style="left:12px;top:4.2px"><svg class="ab" style="left:42.3px;top:8.4px" width="7" height="7" viewBox="0 0 7 7"><path d="M.9 .9L6.1 6.1M6.1 .9L.9 6.1" stroke="#c9252c" stroke-width="2"/></svg><svg class="ab" style="left:55px;top:3px" width="15" height="15" viewBox="0 0 15 15"><path d="M3.4 11.6L12.4 2.6" stroke="#f0a040" stroke-width="3.2" stroke-linecap="square"/><path d="M3.4 11.6L12.4 2.6" stroke="#f7b860" stroke-width="1"/><path d="M1.3 13.7l1-3.3 2.3 2.3z" fill="#f3dcb8"/><path d="M1.2 13.8l.5-1.6 1.1 1.1z" fill="#222"/></svg><svg class="ab" style="left:83.5px;top:1.5px" width="16" height="17" viewBox="0 0 16 17"><defs><linearGradient id="pg9" x1="0" y1="0" x2="0" y2="1"><stop offset="0" stop-color="#fafafa"/><stop offset=".55" stop-color="#d8d8d8"/><stop offset="1" stop-color="#8a8a8a"/></linearGradient></defs><rect x="4.2" y="2" width="7.2" height="5" rx="1" fill="#ececec" stroke="#c4c4c4" stroke-width=".8"/><rect x=".6" y="5.8" width="14.2" height="7.8" rx="1.5" fill="url(#pg9)" stroke="#b0b0b0" stroke-width=".7"/><rect x="3.6" y="11" width="8.2" height="4.8" rx="1" fill="#e2e2e2" stroke="#a8a8a8" stroke-width=".8"/><circle cx="12.6" cy="8" r=".85" fill="#3c3"/><circle cx="12.6" cy="10.1" r=".85" fill="#eb0"/></svg><div class="tx" style="left:111.50px;top:5.03px;font-size:12px;line-height:14px;color:#333;transform:scaleX(0.9448);transform-origin:0 0;">Jéssica Franciele</div><div class="ab" style="left:230.5px;top:0;width:349.0px;height:21px;overflow:hidden"><div class="tx" style="left:28.33px;top:5.03px;font-size:12px;line-height:14px;color:#333;letter-spacing:-0.248px;">Jéssica Franciele Silveira</div></div><div class="tx" style="left:586.70px;top:5.03px;font-size:12px;line-height:14px;color:#333;letter-spacing:0.185px;">031.987.920-88</div><div class="tx" style="left:861.50px;top:5.03px;font-size:12px;line-height:14px;color:#333;letter-spacing:-0.110px;">Novo Hamburgo</div><div class="tx" style="left:1001.90px;top:5.03px;font-size:12px;line-height:14px;color:#333;transform:scaleX(0.8465);transform-origin:0 0;">RS</div></div>
<div class="row odd" style="top:219.730px"><input type="checkbox" class="cb" style="left:12px;top:4.2px"><svg class="ab" style="left:42.3px;top:8.4px" width="7" height="7" viewBox="0 0 7 7"><path d="M.9 .9L6.1 6.1M6.1 .9L.9 6.1" stroke="#c9252c" stroke-width="2"/></svg><svg class="ab" style="left:55px;top:3px" width="15" height="15" viewBox="0 0 15 15"><path d="M3.4 11.6L12.4 2.6" stroke="#f0a040" stroke-width="3.2" stroke-linecap="square"/><path d="M3.4 11.6L12.4 2.6" stroke="#f7b860" stroke-width="1"/><path d="M1.3 13.7l1-3.3 2.3 2.3z" fill="#f3dcb8"/><path d="M1.2 13.8l.5-1.6 1.1 1.1z" fill="#222"/></svg><svg class="ab" style="left:83.5px;top:1.5px" width="16" height="17" viewBox="0 0 16 17"><defs><linearGradient id="pg10" x1="0" y1="0" x2="0" y2="1"><stop offset="0" stop-color="#fafafa"/><stop offset=".55" stop-color="#d8d8d8"/><stop offset="1" stop-color="#8a8a8a"/></linearGradient></defs><rect x="4.2" y="2" width="7.2" height="5" rx="1" fill="#ececec" stroke="#c4c4c4" stroke-width=".8"/><rect x=".6" y="5.8" width="14.2" height="7.8" rx="1.5" fill="url(#pg10)" stroke="#b0b0b0" stroke-width=".7"/><rect x="3.6" y="11" width="8.2" height="4.8" rx="1" fill="#e2e2e2" stroke="#a8a8a8" stroke-width=".8"/><circle cx="12.6" cy="8" r=".85" fill="#3c3"/><circle cx="12.6" cy="10.1" r=".85" fill="#eb0"/></svg><div class="tx" style="left:111.50px;top:5.03px;font-size:12px;line-height:14px;color:#333;transform:scaleX(0.9482);transform-origin:0 0;">Jéssica Garcia Miki</div><div class="ab" style="left:230.5px;top:0;width:349.0px;height:21px;overflow:hidden"><div class="tx" style="left:32.70px;top:5.03px;font-size:12px;line-height:14px;color:#333;letter-spacing:-0.269px;">Jéssica Garcia Santos Miki</div></div><div class="tx" style="left:586.70px;top:5.03px;font-size:12px;line-height:14px;color:#333;letter-spacing:0.185px;">138.070.697-12</div><div class="tx" style="left:861.50px;top:5.03px;font-size:12px;line-height:14px;color:#333;transform:scaleX(0.9498);transform-origin:0 0;">Ponta Grossa</div><div class="tx" style="left:1001.90px;top:5.03px;font-size:12px;line-height:14px;color:#333;transform:scaleX(0.8422);transform-origin:0 0;">PR</div></div>
<div class="row" style="top:241.063px"><input type="checkbox" class="cb" style="left:12px;top:4.2px"><svg class="ab" style="left:42.3px;top:8.4px" width="7" height="7" viewBox="0 0 7 7"><path d="M.9 .9L6.1 6.1M6.1 .9L.9 6.1" stroke="#c9252c" stroke-width="2"/></svg><svg class="ab" style="left:55px;top:3px" width="15" height="15" viewBox="0 0 15 15"><path d="M3.4 11.6L12.4 2.6" stroke="#f0a040" stroke-width="3.2" stroke-linecap="square"/><path d="M3.4 11.6L12.4 2.6" stroke="#f7b860" stroke-width="1"/><path d="M1.3 13.7l1-3.3 2.3 2.3z" fill="#f3dcb8"/><path d="M1.2 13.8l.5-1.6 1.1 1.1z" fill="#222"/></svg><svg class="ab" style="left:83.5px;top:1.5px" width="16" height="17" viewBox="0 0 16 17"><defs><linearGradient id="pg11" x1="0" y1="0" x2="0" y2="1"><stop offset="0" stop-color="#fafafa"/><stop offset=".55" stop-color="#d8d8d8"/><stop offset="1" stop-color="#8a8a8a"/></linearGradient></defs><rect x="4.2" y="2" width="7.2" height="5" rx="1" fill="#ececec" stroke="#c4c4c4" stroke-width=".8"/><rect x=".6" y="5.8" width="14.2" height="7.8" rx="1.5" fill="url(#pg11)" stroke="#b0b0b0" stroke-width=".7"/><rect x="3.6" y="11" width="8.2" height="4.8" rx="1" fill="#e2e2e2" stroke="#a8a8a8" stroke-width=".8"/><circle cx="12.6" cy="8" r=".85" fill="#3c3"/><circle cx="12.6" cy="10.1" r=".85" fill="#eb0"/></svg><div class="tx" style="left:111.50px;top:5.03px;font-size:12px;line-height:14px;color:#333;transform:scaleX(0.9455);transform-origin:0 0;">João Carlos</div><div class="tx" style="left:586.70px;top:5.03px;font-size:12px;line-height:14px;color:#333;letter-spacing:0.185px;">985.616.779-53</div><div class="tx" style="left:861.50px;top:5.03px;font-size:12px;line-height:14px;color:#333;letter-spacing:-0.235px;">Bauru</div><div class="tx" style="left:1001.90px;top:5.03px;font-size:12px;line-height:14px;color:#333;transform:scaleX(0.8305);transform-origin:0 0;">SP</div></div>
<div class="row odd" style="top:262.396px"><input type="checkbox" class="cb" style="left:12px;top:4.2px"><svg class="ab" style="left:42.3px;top:8.4px" width="7" height="7" viewBox="0 0 7 7"><path d="M.9 .9L6.1 6.1M6.1 .9L.9 6.1" stroke="#c9252c" stroke-width="2"/></svg><svg class="ab" style="left:55px;top:3px" width="15" height="15" viewBox="0 0 15 15"><path d="M3.4 11.6L12.4 2.6" stroke="#f0a040" stroke-width="3.2" stroke-linecap="square"/><path d="M3.4 11.6L12.4 2.6" stroke="#f7b860" stroke-width="1"/><path d="M1.3 13.7l1-3.3 2.3 2.3z" fill="#f3dcb8"/><path d="M1.2 13.8l.5-1.6 1.1 1.1z" fill="#222"/></svg><svg class="ab" style="left:83.5px;top:1.5px" width="16" height="17" viewBox="0 0 16 17"><defs><linearGradient id="pg12" x1="0" y1="0" x2="0" y2="1"><stop offset="0" stop-color="#fafafa"/><stop offset=".55" stop-color="#d8d8d8"/><stop offset="1" stop-color="#8a8a8a"/></linearGradient></defs><rect x="4.2" y="2" width="7.2" height="5" rx="1" fill="#ececec" stroke="#c4c4c4" stroke-width=".8"/><rect x=".6" y="5.8" width="14.2" height="7.8" rx="1.5" fill="url(#pg12)" stroke="#b0b0b0" stroke-width=".7"/><rect x="3.6" y="11" width="8.2" height="4.8" rx="1" fill="#e2e2e2" stroke="#a8a8a8" stroke-width=".8"/><circle cx="12.6" cy="8" r=".85" fill="#3c3"/><circle cx="12.6" cy="10.1" r=".85" fill="#eb0"/></svg><div class="tx" style="left:111.50px;top:5.03px;font-size:12px;line-height:14px;color:#333;letter-spacing:0.010px;">karine vilarinho</div><div class="tx" style="left:586.70px;top:5.03px;font-size:12px;line-height:14px;color:#333;letter-spacing:0.185px;">328.536.668-08</div><div class="tx" style="left:861.50px;top:5.03px;font-size:12px;line-height:14px;color:#333;letter-spacing:-0.173px;">Guarujá</div><div class="tx" style="left:1001.90px;top:5.03px;font-size:12px;line-height:14px;color:#333;transform:scaleX(0.8305);transform-origin:0 0;">SP</div></div>
<div class="row" style="top:283.729px"><input type="checkbox" class="cb" style="left:12px;top:4.2px"><svg class="ab" style="left:42.3px;top:8.4px" width="7" height="7" viewBox="0 0 7 7"><path d="M.9 .9L6.1 6.1M6.1 .9L.9 6.1" stroke="#c9252c" stroke-width="2"/></svg><svg class="ab" style="left:55px;top:3px" width="15" height="15" viewBox="0 0 15 15"><path d="M3.4 11.6L12.4 2.6" stroke="#f0a040" stroke-width="3.2" stroke-linecap="square"/><path d="M3.4 11.6L12.4 2.6" stroke="#f7b860" stroke-width="1"/><path d="M1.3 13.7l1-3.3 2.3 2.3z" fill="#f3dcb8"/><path d="M1.2 13.8l.5-1.6 1.1 1.1z" fill="#222"/></svg><svg class="ab" style="left:83.5px;top:1.5px" width="16" height="17" viewBox="0 0 16 17"><defs><linearGradient id="pg13" x1="0" y1="0" x2="0" y2="1"><stop offset="0" stop-color="#fafafa"/><stop offset=".55" stop-color="#d8d8d8"/><stop offset="1" stop-color="#8a8a8a"/></linearGradient></defs><rect x="4.2" y="2" width="7.2" height="5" rx="1" fill="#ececec" stroke="#c4c4c4" stroke-width=".8"/><rect x=".6" y="5.8" width="14.2" height="7.8" rx="1.5" fill="url(#pg13)" stroke="#b0b0b0" stroke-width=".7"/><rect x="3.6" y="11" width="8.2" height="4.8" rx="1" fill="#e2e2e2" stroke="#a8a8a8" stroke-width=".8"/><circle cx="12.6" cy="8" r=".85" fill="#3c3"/><circle cx="12.6" cy="10.1" r=".85" fill="#eb0"/></svg><div class="tx" style="left:111.50px;top:5.03px;font-size:12px;line-height:14px;color:#333;letter-spacing:-0.121px;">Kátia Batista da Silva</div><div class="ab" style="left:230.5px;top:0;width:349.0px;height:21px;overflow:hidden"><div class="tx" style="left:11.06px;top:5.03px;font-size:12px;line-height:14px;color:#333;letter-spacing:-0.125px;">Kátia Batista da Silva Justino Santos</div></div><div class="tx" style="left:586.70px;top:5.03px;font-size:12px;line-height:14px;color:#333;letter-spacing:0.185px;">250.545.928-22</div><div class="tx" style="left:861.50px;top:5.03px;font-size:12px;line-height:14px;color:#333;letter-spacing:-0.276px;">Mogi das Cruzes</div><div class="tx" style="left:1001.90px;top:5.03px;font-size:12px;line-height:14px;color:#333;transform:scaleX(0.8305);transform-origin:0 0;">SP</div></div>
<div class="row odd" style="top:305.062px"><input type="checkbox" class="cb" style="left:12px;top:4.2px"><svg class="ab" style="left:42.3px;top:8.4px" width="7" height="7" viewBox="0 0 7 7"><path d="M.9 .9L6.1 6.1M6.1 .9L.9 6.1" stroke="#c9252c" stroke-width="2"/></svg><svg class="ab" style="left:55px;top:3px" width="15" height="15" viewBox="0 0 15 15"><path d="M3.4 11.6L12.4 2.6" stroke="#f0a040" stroke-width="3.2" stroke-linecap="square"/><path d="M3.4 11.6L12.4 2.6" stroke="#f7b860" stroke-width="1"/><path d="M1.3 13.7l1-3.3 2.3 2.3z" fill="#f3dcb8"/><path d="M1.2 13.8l.5-1.6 1.1 1.1z" fill="#222"/></svg><svg class="ab" style="left:83.5px;top:1.5px" width="16" height="17" viewBox="0 0 16 17"><defs><linearGradient id="pg14" x1="0" y1="0" x2="0" y2="1"><stop offset="0" stop-color="#fafafa"/><stop offset=".55" stop-color="#d8d8d8"/><stop offset="1" stop-color="#8a8a8a"/></linearGradient></defs><rect x="4.2" y="2" width="7.2" height="5" rx="1" fill="#ececec" stroke="#c4c4c4" stroke-width=".8"/><rect x=".6" y="5.8" width="14.2" height="7.8" rx="1.5" fill="url(#pg14)" stroke="#b0b0b0" stroke-width=".7"/><rect x="3.6" y="11" width="8.2" height="4.8" rx="1" fill="#e2e2e2" stroke="#a8a8a8" stroke-width=".8"/><circle cx="12.6" cy="8" r=".85" fill="#3c3"/><circle cx="12.6" cy="10.1" r=".85" fill="#eb0"/></svg><div class="tx" style="left:111.50px;top:5.03px;font-size:12px;line-height:14px;color:#333;letter-spacing:-0.178px;">Lojas aliança</div><div class="tx" style="left:586.70px;top:5.03px;font-size:12px;line-height:14px;color:#333;letter-spacing:0.238px;">76.710.631/0001-66</div><div class="tx" style="left:861.50px;top:5.03px;font-size:12px;line-height:14px;color:#333;letter-spacing:-0.157px;">Aracaju</div><div class="tx" style="left:1001.90px;top:5.03px;font-size:12px;line-height:14px;color:#333;transform:scaleX(0.8380);transform-origin:0 0;">SE</div><div class="tx" style="left:1106.70px;top:5.03px;font-size:12px;line-height:14px;color:#333;">Cliente d...</div></div>
<div class="row" style="top:326.395px"><input type="checkbox" class="cb" style="left:12px;top:4.2px"><svg class="ab" style="left:42.3px;top:8.4px" width="7" height="7" viewBox="0 0 7 7"><path d="M.9 .9L6.1 6.1M6.1 .9L.9 6.1" stroke="#c9252c" stroke-width="2"/></svg><svg class="ab" style="left:55px;top:3px" width="15" height="15" viewBox="0 0 15 15"><path d="M3.4 11.6L12.4 2.6" stroke="#f0a040" stroke-width="3.2" stroke-linecap="square"/><path d="M3.4 11.6L12.4 2.6" stroke="#f7b860" stroke-width="1"/><path d="M1.3 13.7l1-3.3 2.3 2.3z" fill="#f3dcb8"/><path d="M1.2 13.8l.5-1.6 1.1 1.1z" fill="#222"/></svg><svg class="ab" style="left:83.5px;top:1.5px" width="16" height="17" viewBox="0 0 16 17"><defs><linearGradient id="pg15" x1="0" y1="0" x2="0" y2="1"><stop offset="0" stop-color="#fafafa"/><stop offset=".55" stop-color="#d8d8d8"/><stop offset="1" stop-color="#8a8a8a"/></linearGradient></defs><rect x="4.2" y="2" width="7.2" height="5" rx="1" fill="#ececec" stroke="#c4c4c4" stroke-width=".8"/><rect x=".6" y="5.8" width="14.2" height="7.8" rx="1.5" fill="url(#pg15)" stroke="#b0b0b0" stroke-width=".7"/><rect x="3.6" y="11" width="8.2" height="4.8" rx="1" fill="#e2e2e2" stroke="#a8a8a8" stroke-width=".8"/><circle cx="12.6" cy="8" r=".85" fill="#3c3"/><circle cx="12.6" cy="10.1" r=".85" fill="#eb0"/></svg><div class="tx" style="left:111.50px;top:5.03px;font-size:12px;line-height:14px;color:#333;letter-spacing:-0.295px;">Lojas Paraíba</div><div class="tx" style="left:586.70px;top:5.03px;font-size:12px;line-height:14px;color:#333;letter-spacing:0.185px;">547.203.750-65</div><div class="tx" style="left:861.50px;top:5.03px;font-size:12px;line-height:14px;color:#333;transform:scaleX(0.9393);transform-origin:0 0;">Brasília</div><div class="tx" style="left:1001.90px;top:5.03px;font-size:12px;line-height:14px;color:#333;transform:scaleX(0.8995);transform-origin:0 0;">DF</div></div>
<div class="row odd" style="top:347.728px"><input type="checkbox" class="cb" style="left:12px;top:4.2px"><svg class="ab" style="left:42.3px;top:8.4px" width="7" height="7" viewBox="0 0 7 7"><path d="M.9 .9L6.1 6.1M6.1 .9L.9 6.1" stroke="#c9252c" stroke-width="2"/></svg><svg class="ab" style="left:55px;top:3px" width="15" height="15" viewBox="0 0 15 15"><path d="M3.4 11.6L12.4 2.6" stroke="#f0a040" stroke-width="3.2" stroke-linecap="square"/><path d="M3.4 11.6L12.4 2.6" stroke="#f7b860" stroke-width="1"/><path d="M1.3 13.7l1-3.3 2.3 2.3z" fill="#f3dcb8"/><path d="M1.2 13.8l.5-1.6 1.1 1.1z" fill="#222"/></svg><svg class="ab" style="left:83.5px;top:1.5px" width="16" height="17" viewBox="0 0 16 17"><defs><linearGradient id="pg16" x1="0" y1="0" x2="0" y2="1"><stop offset="0" stop-color="#fafafa"/><stop offset=".55" stop-color="#d8d8d8"/><stop offset="1" stop-color="#8a8a8a"/></linearGradient></defs><rect x="4.2" y="2" width="7.2" height="5" rx="1" fill="#ececec" stroke="#c4c4c4" stroke-width=".8"/><rect x=".6" y="5.8" width="14.2" height="7.8" rx="1.5" fill="url(#pg16)" stroke="#b0b0b0" stroke-width=".7"/><rect x="3.6" y="11" width="8.2" height="4.8" rx="1" fill="#e2e2e2" stroke="#a8a8a8" stroke-width=".8"/><circle cx="12.6" cy="8" r=".85" fill="#3c3"/><circle cx="12.6" cy="10.1" r=".85" fill="#eb0"/></svg><div class="tx" style="left:111.50px;top:5.03px;font-size:12px;line-height:14px;color:#333;letter-spacing:-0.116px;">Maria de Fátima</div><div class="ab" style="left:230.5px;top:0;width:349.0px;height:21px;overflow:hidden"><div class="tx" style="left:-3.03px;top:5.03px;font-size:12px;line-height:14px;color:#333;letter-spacing:-0.099px;">Maria de Fátima Lima Almeida Xavier</div></div><div class="tx" style="left:586.70px;top:5.03px;font-size:12px;line-height:14px;color:#333;letter-spacing:0.185px;">280.559.298-07</div><div class="tx" style="left:861.50px;top:5.03px;font-size:12px;line-height:14px;color:#333;letter-spacing:-0.112px;">Bertioga</div><div class="tx" style="left:1001.90px;top:5.03px;font-size:12px;line-height:14px;color:#333;transform:scaleX(0.8305);transform-origin:0 0;">SP</div></div>
<div class="row" style="top:369.061px"><input type="checkbox" class="cb" style="left:12px;top:4.2px"><svg class="ab" style="left:42.3px;top:8.4px" width="7" height="7" viewBox="0 0 7 7"><path d="M.9 .9L6.1 6.1M6.1 .9L.9 6.1" stroke="#c9252c" stroke-width="2"/></svg><svg class="ab" style="left:55px;top:3px" width="15" height="15" viewBox="0 0 15 15"><path d="M3.4 11.6L12.4 2.6" stroke="#f0a040" stroke-width="3.2" stroke-linecap="square"/><path d="M3.4 11.6L12.4 2.6" stroke="#f7b860" stroke-width="1"/><path d="M1.3 13.7l1-3.3 2.3 2.3z" fill="#f3dcb8"/><path d="M1.2 13.8l.5-1.6 1.1 1.1z" fill="#222"/></svg><svg class="ab" style="left:83.5px;top:1.5px" width="16" height="17" viewBox="0 0 16 17"><defs><linearGradient id="pg17" x1="0" y1="0" x2="0" y2="1"><stop offset="0" stop-color="#fafafa"/><stop offset=".55" stop-color="#d8d8d8"/><stop offset="1" stop-color="#8a8a8a"/></linearGradient></defs><rect x="4.2" y="2" width="7.2" height="5" rx="1" fill="#ececec" stroke="#c4c4c4" stroke-width=".8"/><rect x=".6" y="5.8" width="14.2" height="7.8" rx="1.5" fill="url(#pg17)" stroke="#b0b0b0" stroke-width=".7"/><rect x="3.6" y="11" width="8.2" height="4.8" rx="1" fill="#e2e2e2" stroke="#a8a8a8" stroke-width=".8"/><circle cx="12.6" cy="8" r=".85" fill="#3c3"/><circle cx="12.6" cy="10.1" r=".85" fill="#eb0"/></svg><div class="tx" style="left:111.50px;top:5.03px;font-size:12px;line-height:14px;color:#333;letter-spacing:-0.046px;">Maria Ivaneide</div><div class="ab" style="left:230.5px;top:0;width:349.0px;height:21px;overflow:hidden"><div class="tx" style="left:32.08px;top:5.03px;font-size:12px;line-height:14px;color:#333;letter-spacing:-0.099px;">Maria Ivaneide Santos</div></div><div class="tx" style="left:586.70px;top:5.03px;font-size:12px;line-height:14px;color:#333;letter-spacing:0.185px;">077.782.234-22</div><div class="ab" style="left:861.5px;top:0;width:135px;height:21px;overflow:hidden"><div class="tx" style="left:0.00px;top:5.03px;font-size:12px;line-height:14px;color:#333;letter-spacing:-0.153px;">Santa Cruz do Capiba...</div></div><div class="tx" style="left:1001.90px;top:5.03px;font-size:12px;line-height:14px;color:#333;transform:scaleX(0.8335);transform-origin:0 0;">PE</div></div>
<div class="row odd" style="top:390.394px"><input type="checkbox" class="cb" style="left:12px;top:4.2px"><svg class="ab" style="left:42.3px;top:8.4px" width="7" height="7" viewBox="0 0 7 7"><path d="M.9 .9L6.1 6.1M6.1 .9L.9 6.1" stroke="#c9252c" stroke-width="2"/></svg><svg class="ab" style="left:55px;top:3px" width="15" height="15" viewBox="0 0 15 15"><path d="M3.4 11.6L12.4 2.6" stroke="#f0a040" stroke-width="3.2" stroke-linecap="square"/><path d="M3.4 11.6L12.4 2.6" stroke="#f7b860" stroke-width="1"/><path d="M1.3 13.7l1-3.3 2.3 2.3z" fill="#f3dcb8"/><path d="M1.2 13.8l.5-1.6 1.1 1.1z" fill="#222"/></svg><svg class="ab" style="left:83.5px;top:1.5px" width="16" height="17" viewBox="0 0 16 17"><defs><linearGradient id="pg18" x1="0" y1="0" x2="0" y2="1"><stop offset="0" stop-color="#fafafa"/><stop offset=".55" stop-color="#d8d8d8"/><stop offset="1" stop-color="#8a8a8a"/></linearGradient></defs><rect x="4.2" y="2" width="7.2" height="5" rx="1" fill="#ececec" stroke="#c4c4c4" stroke-width=".8"/><rect x=".6" y="5.8" width="14.2" height="7.8" rx="1.5" fill="url(#pg18)" stroke="#b0b0b0" stroke-width=".7"/><rect x="3.6" y="11" width="8.2" height="4.8" rx="1" fill="#e2e2e2" stroke="#a8a8a8" stroke-width=".8"/><circle cx="12.6" cy="8" r=".85" fill="#3c3"/><circle cx="12.6" cy="10.1" r=".85" fill="#eb0"/></svg><div class="tx" style="left:111.50px;top:5.03px;font-size:12px;line-height:14px;color:#333;letter-spacing:-0.272px;">Roseli Lima</div><div class="tx" style="left:586.70px;top:5.03px;font-size:12px;line-height:14px;color:#333;letter-spacing:0.185px;">089.542.138-04</div><div class="tx" style="left:861.50px;top:5.03px;font-size:12px;line-height:14px;color:#333;transform:scaleX(0.9414);transform-origin:0 0;">São Paulo</div><div class="tx" style="left:1001.90px;top:5.03px;font-size:12px;line-height:14px;color:#333;transform:scaleX(0.8305);transform-origin:0 0;">SP</div></div>
<div class="vd" style="left:38.0px;top:0;height:411.5px"></div>
<div class="vd" style="left:76.0px;top:0;height:411.5px"></div>
<div class="vd" style="left:104.0px;top:0;height:411.5px"></div>
<div class="vd" style="left:230.0px;top:0;height:411.5px"></div>
<div class="vd" style="left:579.0px;top:0;height:411.5px"></div>
<div class="vd" style="left:739.0px;top:0;height:411.5px"></div>
<div class="vd" style="left:854.0px;top:0;height:411.5px"></div>
<div class="vd" style="left:994.5px;top:0;height:411.5px"></div>
<div class="vd" style="left:1029.0px;top:0;height:411.5px"></div>
<div class="vd" style="left:1099.0px;top:0;height:411.5px"></div>
<div class="vd" style="left:1169.0px;top:0;height:411.5px"></div>
<div class="vd" style="left:1249.0px;top:0;height:411.5px"></div>
</div>
<div class="ab" style="left:722px;top:330px;width:16px;height:16px;border-radius:50%;background:radial-gradient(circle at 50% 50%,#ff9a9a 0,#ff5a5a 45%,#ff1a1a 85%,#ff2020 100%)"></div>
<div class="ab" style="left:1320px;top:213.5px;width:17px;height:411.5px;background:#f1f1f1;"></div>
<div class="ab" style="left:1322px;top:462px;width:13px;height:145px;background:#c1c1c1;"></div>
<div class="ab" style="left:1324.5px;top:221.2px;width:0;height:0;border-left:4px solid transparent;border-right:4px solid transparent;border-bottom:4px solid #505050"></div>
<div class="ab" style="left:1324.5px;top:613.5px;width:0;height:0;border-left:4px solid transparent;border-right:4px solid transparent;border-top:4px solid #505050"></div>
<div class="ab" style="left:8px;top:625px;width:1312px;height:16.8px;background:#f1f1f1;"></div>
<div class="ab" style="left:25.2px;top:627px;width:1224.8px;height:12.9px;background:#c1c1c1;"></div>
<div class="ab" style="left:14px;top:630px;width:0;height:0;border-top:3.8px solid transparent;border-bottom:3.8px solid transparent;border-right:4px solid #a0a0a0"></div>
<div class="ab" style="left:1310px;top:630px;width:0;height:0;border-top:3.8px solid transparent;border-bottom:3.8px solid transparent;border-left:4px solid #505050"></div>
<div class="ab" style="left:1320px;top:625px;width:17px;height:16.8px;background:#dcdcdc;"></div>
<div class="ab" style="left:203px;top:92.5px;width:160px;height:555px;background:#f0f1f3;border:1px solid #a9aeb4;box-shadow:2px 1px 3px rgba(0,0,0,.38)"></div>
<input type="checkbox" class="cb" style="left:213px;top:96px" checked>
<div class="tx" style="left:229.20px;top:98.63px;font-size:12px;line-height:14px;color:#666;letter-spacing:-0.204px;">Apelido</div>
<input type="checkbox" class="cb" style="left:213px;top:115px" checked>
<div class="tx" style="left:229.20px;top:117.63px;font-size:12px;line-height:14px;color:#666;transform:scaleX(0.9436);transform-origin:0 0;">Razão social</div>
<input type="checkbox" class="cb" style="left:213px;top:134px">
<div class="tx" style="left:229.20px;top:136.63px;font-size:12px;line-height:14px;color:#666;letter-spacing:-0.098px;">Nome fantasia</div>
<input type="checkbox" class="cb" style="left:213px;top:153px" checked>
<div class="tx" style="left:229.20px;top:155.63px;font-size:12px;line-height:14px;color:#666;transform:scaleX(0.8776);transform-origin:0 0;">CNPJ/CPF</div>
<input type="checkbox" class="cb" style="left:213px;top:172px" checked>
<div class="tx" style="left:229.20px;top:174.63px;font-size:12px;line-height:14px;color:#666;letter-spacing:-0.292px;">Cadastro</div>
<input type="checkbox" class="cb" style="left:213px;top:191px" checked>
<div class="tx" style="left:229.20px;top:193.63px;font-size:12px;line-height:14px;color:#666;">Tipo</div>
<input type="checkbox" class="cb" style="left:213px;top:210px">
<div class="tx" style="left:229.20px;top:212.63px;font-size:12px;line-height:14px;color:#666;letter-spacing:-0.223px;">Município</div>
<input type="checkbox" class="cb" style="left:213px;top:229px">
<div class="tx" style="left:229.20px;top:231.63px;font-size:12px;line-height:14px;color:#666;transform:scaleX(0.8830);transform-origin:0 0;">UF</div>
<input type="checkbox" class="cb" style="left:213px;top:248px">
<div class="tx" style="left:229.20px;top:250.63px;font-size:12px;line-height:14px;color:#666;transform:scaleX(0.8751);transform-origin:0 0;">País</div>
<input type="checkbox" class="cb" style="left:213px;top:267px">
<div class="tx" style="left:229.20px;top:269.63px;font-size:12px;line-height:14px;color:#666;letter-spacing:-0.131px;">Estado do cadastro</div>
<input type="checkbox" class="cb" style="left:213px;top:286px">
<div class="tx" style="left:229.20px;top:288.63px;font-size:12px;line-height:14px;color:#666;letter-spacing:-0.273px;">Criadas de</div>
<input type="checkbox" class="cb" style="left:213px;top:305px">
<div class="tx" style="left:229.20px;top:307.63px;font-size:12px;line-height:14px;color:#666;letter-spacing:-0.142px;">Criada por</div>
<input type="checkbox" class="cb" style="left:213px;top:324px" checked>
<div class="tx" style="left:229.20px;top:326.63px;font-size:12px;line-height:14px;color:#666;letter-spacing:-0.169px;">Representante</div>
<input type="checkbox" class="cb" style="left:213px;top:343px">
<div class="tx" style="left:229.20px;top:345.63px;font-size:12px;line-height:14px;color:#666;letter-spacing:-0.064px;">Tabela de preços</div>
<input type="checkbox" class="cb" style="left:213px;top:362px" checked>
<div class="tx" style="left:229.20px;top:364.63px;font-size:12px;line-height:14px;color:#666;letter-spacing:-0.208px;">Segmento</div>
<input type="checkbox" class="cb" style="left:213px;top:381px" checked>
<div class="tx" style="left:229.20px;top:383.63px;font-size:12px;line-height:14px;color:#666;transform:scaleX(0.9452);transform-origin:0 0;">Região</div>
<input type="checkbox" class="cb" style="left:213px;top:400px" checked>
<div class="tx" style="left:229.20px;top:402.63px;font-size:12px;line-height:14px;color:#666;letter-spacing:-0.157px;">Perfil</div>
<input type="checkbox" class="cb" style="left:213px;top:419px">
<div class="tx" style="left:229.20px;top:421.63px;font-size:12px;line-height:14px;color:#666;letter-spacing:-0.093px;">Forma de pedido</div>
<input type="checkbox" class="cb" style="left:213px;top:438px" checked>
<div class="tx" style="left:229.20px;top:440.63px;font-size:12px;line-height:14px;color:#666;letter-spacing:-0.363px;">Estado</div>
<input type="checkbox" class="cb" style="left:213px;top:457px">
<div class="tx" style="left:229.20px;top:459.63px;font-size:12px;line-height:14px;color:#666;letter-spacing:-0.181px;">Data estado (CRM)</div>
<input type="checkbox" class="cb" style="left:213px;top:476px">
<div class="tx" style="left:229.20px;top:478.63px;font-size:12px;line-height:14px;color:#666;letter-spacing:-0.174px;">Situação fiscal especial</div>
<input type="checkbox" class="cb" style="left:213px;top:495px">
<div class="tx" style="left:229.20px;top:497.63px;font-size:12px;line-height:14px;color:#666;letter-spacing:0.051px;">Telefone</div>
<input type="checkbox" class="cb" style="left:213px;top:514px">
<div class="tx" style="left:229.20px;top:516.63px;font-size:12px;line-height:14px;color:#666;transform:scaleX(0.9461);transform-origin:0 0;">Inscrição na SUFRAMA</div>
<input type="checkbox" class="cb" style="left:213px;top:533px">
<div class="tx" style="left:229.20px;top:535.63px;font-size:12px;line-height:14px;color:#666;letter-spacing:-0.098px;">Órgão público</div>
<input type="checkbox" class="cb" style="left:213px;top:552px">
<div class="tx" style="left:229.20px;top:554.63px;font-size:12px;line-height:14px;color:#666;letter-spacing:-0.289px;">Salário</div>
<input type="checkbox" class="cb" style="left:213px;top:571px">
<div class="tx" style="left:229.20px;top:573.63px;font-size:12px;line-height:14px;color:#666;letter-spacing:0.034px;">Teste D</div>
<input type="checkbox" class="cb" style="left:213px;top:590px">
<div class="tx" style="left:229.20px;top:592.63px;font-size:12px;line-height:14px;color:#666;letter-spacing:-0.274px;">Campo A</div>
<input type="checkbox" class="cb" style="left:213px;top:609px">
<div class="tx" style="left:229.20px;top:611.63px;font-size:12px;line-height:14px;color:#666;letter-spacing:-0.409px;">Campo B</div>
<input type="checkbox" class="cb" style="left:213px;top:628px">
<div class="tx" style="left:229.20px;top:630.63px;font-size:12px;line-height:14px;color:#666;transform:scaleX(0.9414);transform-origin:0 0;">Campo C</div>
<div class="ab" style="left:19px;top:81px;width:190px;height:20px;border:3px solid #f00;border-radius:2px"></div>
<div class="ab" style="left:200px;top:357px;width:169px;height:117.5px;border:3px solid #f00;border-radius:2px"></div>
</body></html>
